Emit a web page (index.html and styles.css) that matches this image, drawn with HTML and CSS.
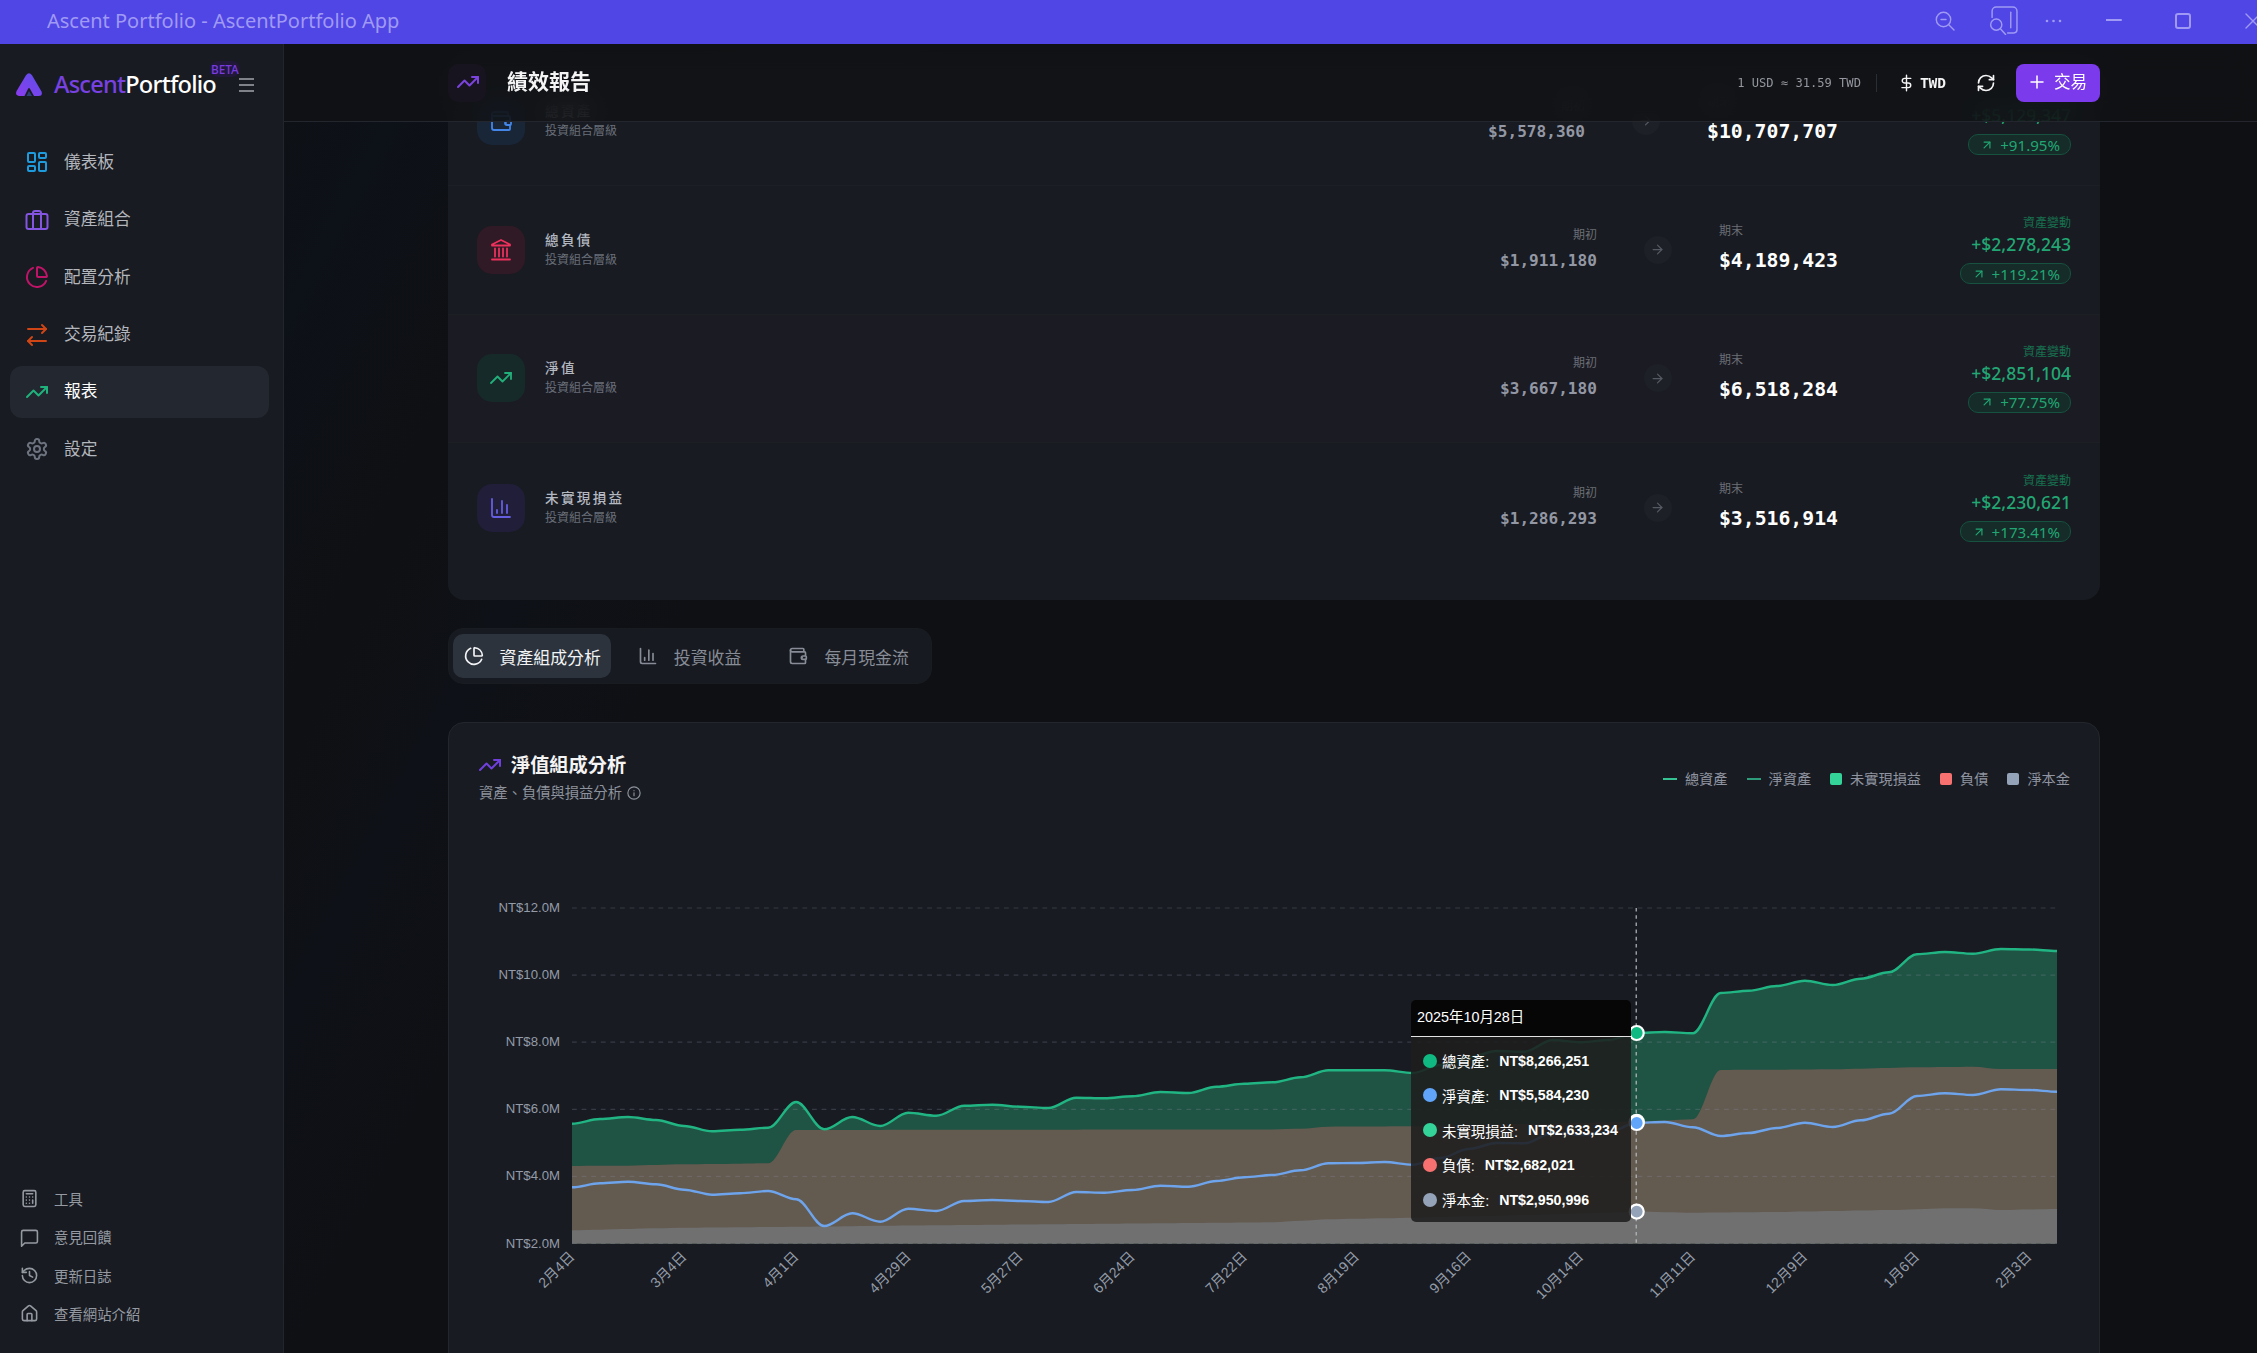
FILE: index.html
```html
<!DOCTYPE html>
<html lang="zh-Hant">
<head>
<meta charset="utf-8">
<title>Ascent Portfolio - AscentPortfolio App</title>
<link rel="stylesheet" href="styles.css">
</head>
<body>
<svg class="defs" width="0" height="0" aria-hidden="true">
  <symbol id="trend" viewBox="0 0 24 24"><path d="M22 7 13.5 15.5l-5-5L2 17"/><path d="M16 7h6v6"/></symbol>
  <symbol id="pie" viewBox="0 0 24 24"><path d="M21 12c.55 0 1-.45.95-1A10 10 0 0 0 13 2.05c-.55-.05-1 .4-1 .95v8a1 1 0 0 0 1 1z"/><path d="M21.2 15.9A10 10 0 1 1 8 2.83"/></symbol>
  <symbol id="bars" viewBox="0 0 24 24"><path d="M3 3v16a2 2 0 0 0 2 2h16"/><path d="M18 17V9"/><path d="M13 17V5"/><path d="M8 17v-3"/></symbol>
  <symbol id="wallet" viewBox="0 0 24 24"><path d="M17 14h.01"/><path d="M19 7V4a1 1 0 0 0-1-1H5a2 2 0 0 0 0 4h15a1 1 0 0 1 1 1v4h-3a2 2 0 0 0 0 4h3a1 1 0 0 0 1-1v-2a1 1 0 0 0-1-1"/><path d="M3 5v14a2 2 0 0 0 2 2h15a1 1 0 0 0 1-1v-4"/></symbol>
  <symbol id="arrow" viewBox="0 0 24 24"><path d="M5 12h14"/><path d="m12 5 7 7-7 7"/></symbol>
  <symbol id="upright" viewBox="0 0 24 24"><path d="M7 7h10v10"/><path d="M7 17 17 7"/></symbol>
</svg>

<div class="titlebar">
  <span class="titlebar-name">Ascent Portfolio - AscentPortfolio App</span>
  <div class="titlebar-tools">
    <svg class="tb-zoom" viewBox="0 0 20 20"><circle cx="8.5" cy="8.5" r="7.2"/><path d="M6 8.5h5M14 14l5 5"/></svg>
    <svg class="tb-panel" viewBox="0 0 28 28"><path d="M3 11V5a4 4 0 0 1 4-4h16a4 4 0 0 1 4 4v18a3 3 0 0 1-3 3h-6"/><path d="M21 6v15"/><circle cx="7" cy="18" r="5.4"/><path d="m11 22 5 5.500"/></svg>
    <svg class="tb-dots" viewBox="0 0 18 4"><circle cx="2" cy="2" r="1.300"/><circle cx="8.500" cy="2" r="1.300"/><circle cx="15" cy="2" r="1.300"/></svg>
    <svg class="tb-min" viewBox="0 0 16 16"><path d="M0 7h15"/></svg>
    <svg class="tb-max" viewBox="0 0 16 16"><rect x="1" y="1" width="14" height="14" rx="2"/></svg>
    <svg class="tb-close" viewBox="0 0 16 16"><path d="m1 1 14 14M15 1 1 15"/></svg>
  </div>
</div>

<div class="app">
  <aside class="sidebar">
    <div class="brand">
      <svg class="brand-mark" viewBox="0 0 26 23"><defs><linearGradient id="lg" x1="0" y1="1" x2="1" y2="0"><stop offset="0" stop-color="#8b3cf0"/><stop offset="1" stop-color="#5b50e8"/></linearGradient></defs><path d="M10 2.200Q13-1.500 16 2.200L25.500 18.500Q27 23 22.500 23H18L13.800 15.500Q13 14.500 12.200 15.500L8.500 23H3Q-1.200 22.500.6 18Z" fill="url(#lg)"/><path d="M10.500 23 13 18l3 5Z" fill="#2b3f78"/></svg>
      <span class="brand-name"><b>Ascent</b>Portfolio<i class="beta">BETA</i></span>
      <svg class="burger" viewBox="0 0 15 14"><path d="M0 1h15M0 7h15M0 13h15"/></svg>
    </div>
    <nav class="nav">
      <a class="nav-item c-sky"><svg viewBox="0 0 24 24"><rect x="3" y="3" width="7" height="9" rx="1"/><rect x="14" y="3" width="7" height="5" rx="1"/><rect x="14" y="12" width="7" height="9" rx="1"/><rect x="3" y="16" width="7" height="5" rx="1"/></svg><span>儀表板</span></a>
      <a class="nav-item c-violet"><svg viewBox="0 0 24 24"><path d="M8 21V5a2 2 0 0 1 2-2h4a2 2 0 0 1 2 2v16"/><rect x="1.500" y="6" width="21" height="15" rx="2"/></svg><span>資產組合</span></a>
      <a class="nav-item c-pink"><svg><use href="#pie"/></svg><span>配置分析</span></a>
      <a class="nav-item c-orange"><svg viewBox="0 0 24 24"><path d="m17 2 4 4-4 4"/><path d="M3 6h18"/><path d="m7 22-4-4 4-4"/><path d="M21 18H3"/></svg><span>交易紀錄</span></a>
      <a class="nav-item c-green active"><svg><use href="#trend"/></svg><span>報表</span></a>
      <a class="nav-item c-gray"><svg viewBox="0 0 24 24"><path d="M12.220 2h-.44a2 2 0 0 0-2 2v.18a2 2 0 0 1-1 1.730l-.43.25a2 2 0 0 1-2 0l-.15-.08a2 2 0 0 0-2.730.730l-.22.38a2 2 0 0 0 .73 2.730l.15.1a2 2 0 0 1 1 1.720v.51a2 2 0 0 1-1 1.740l-.15.09a2 2 0 0 0-.73 2.730l.22.38a2 2 0 0 0 2.730.730l.15-.08a2 2 0 0 1 2 0l.43.25a2 2 0 0 1 1 1.730V20a2 2 0 0 0 2 2h.44a2 2 0 0 0 2-2v-.18a2 2 0 0 1 1-1.730l.43-.25a2 2 0 0 1 2 0l.15.08a2 2 0 0 0 2.730-.730l.22-.39a2 2 0 0 0-.73-2.730l-.15-.08a2 2 0 0 1-1-1.740v-.5a2 2 0 0 1 1-1.740l.15-.09a2 2 0 0 0 .73-2.730l-.22-.38a2 2 0 0 0-2.730-.730l-.15.08a2 2 0 0 1-2 0l-.43-.25a2 2 0 0 1-1-1.730V4a2 2 0 0 0-2-2z"/><circle cx="12" cy="12" r="3"/></svg><span>設定</span></a>
    </nav>
    <nav class="links">
      <a><svg viewBox="0 0 24 24"><rect x="4" y="2" width="16" height="20" rx="2"/><path d="M8 6h8M16 14v4M16 10h.01M12 10h.01M8 10h.01M12 14h.01M8 14h.01M12 18h.01M8 18h.01"/></svg><span>工具</span></a>
      <a><svg viewBox="0 0 24 24"><path d="M22 17a2 2 0 0 1-2 2H6l-4 4V5a2 2 0 0 1 2-2h16a2 2 0 0 1 2 2z"/></svg><span>意見回饋</span></a>
      <a><svg viewBox="0 0 24 24"><path d="M3 12a9 9 0 1 0 9-9 9.750 9.750 0 0 0-6.740 2.740L3 8"/><path d="M3 3v5h5"/><path d="M12 7v5l4 2"/></svg><span>更新日誌</span></a>
      <a><svg viewBox="0 0 24 24"><path d="M15 21v-8a1 1 0 0 0-1-1h-4a1 1 0 0 0-1 1v8"/><path d="M3 10a2 2 0 0 1 .71-1.530l7-6a2 2 0 0 1 2.580 0l7 6A2 2 0 0 1 21 10v9a2 2 0 0 1-2 2H5a2 2 0 0 1-2-2z"/></svg><span>查看網站介紹</span></a>
    </nav>
  </aside>

  <main class="main">
    <header class="header">
      <span class="header-icon"><svg><use href="#trend"/></svg></span>
      <h1>績效報告</h1>
      <span class="rate">1 USD ≈ 31.59 TWD</span>
      <span class="currency"><svg viewBox="0 0 24 24"><path d="M12 1v22M18 5.500H9.500a3.500 3.250 0 0 0 0 6.500h5a3.500 3.250 0 0 1 0 6.500H5.500"/></svg>TWD</span>
      <svg class="refresh" viewBox="0 0 24 24"><path d="M3 12a9 9 0 0 1 9-9 9.750 9.750 0 0 1 6.740 2.740L21 8"/><path d="M21 3v5h-5"/><path d="M21 12a9 9 0 0 1-9 9 9.750 9.750 0 0 1-6.740-2.740L3 16"/><path d="M8 16H3v5"/></svg>
      <button class="trade"><svg viewBox="0 0 12 12"><path d="M6 0v12M0 6h12"/></svg><span>交易</span></button>
    </header>

    <div class="content">
      <section class="summary">
        <div class="row">
          <span class="tile blue"><svg><use href="#wallet"/></svg></span>
          <div class="label"><strong>總資產</strong><small>投資組合層級</small></div>
          <div class="begin"><small>期初</small><span>$5,578,360</span></div>
          <span class="go"><svg><use href="#arrow"/></svg></span>
          <div class="end"><small>期末</small><span>$10,707,707</span></div>
          <div class="change"><small>資產變動</small><span>+$5,129,347</span><em><svg><use href="#upright"/></svg>+91.95%</em></div>
        </div>
        <div class="row">
          <span class="tile rose"><svg viewBox="0 0 24 24"><path d="M3 21.500h18M6 18.500v-8M10 18.500v-8M14 18.500v-8M18 18.500v-8M12 2l9 4.500v1H3v-1z"/></svg></span>
          <div class="label"><strong>總負債</strong><small>投資組合層級</small></div>
          <div class="begin"><small>期初</small><span>$1,911,180</span></div>
          <span class="go"><svg><use href="#arrow"/></svg></span>
          <div class="end"><small>期末</small><span>$4,189,423</span></div>
          <div class="change"><small>資產變動</small><span>+$2,278,243</span><em><svg><use href="#upright"/></svg>+119.21%</em></div>
        </div>
        <div class="row tinted">
          <span class="tile green"><svg><use href="#trend"/></svg></span>
          <div class="label"><strong>淨值</strong><small>投資組合層級</small></div>
          <div class="begin"><small>期初</small><span>$3,667,180</span></div>
          <span class="go"><svg><use href="#arrow"/></svg></span>
          <div class="end"><small>期末</small><span>$6,518,284</span></div>
          <div class="change"><small>資產變動</small><span>+$2,851,104</span><em><svg><use href="#upright"/></svg>+77.75%</em></div>
        </div>
        <div class="row">
          <span class="tile indigo"><svg><use href="#bars"/></svg></span>
          <div class="label"><strong>未實現損益</strong><small>投資組合層級</small></div>
          <div class="begin"><small>期初</small><span>$1,286,293</span></div>
          <span class="go"><svg><use href="#arrow"/></svg></span>
          <div class="end"><small>期末</small><span>$3,516,914</span></div>
          <div class="change"><small>資產變動</small><span>+$2,230,621</span><em><svg><use href="#upright"/></svg>+173.41%</em></div>
        </div>
      </section>

      <div class="tabs">
        <span class="tab on"><svg><use href="#pie"/></svg>資產組成分析</span>
        <span class="tab"><svg><use href="#bars"/></svg>投資收益</span>
        <span class="tab"><svg><use href="#wallet"/></svg>每月現金流</span>
      </div>

      <section class="chart-card">
        <div class="chart-head">
          <div>
            <h2><svg><use href="#trend"/></svg>淨值組成分析</h2>
            <p>資產、負債與損益分析<svg viewBox="0 0 24 24"><circle cx="12" cy="12" r="10.500"/><path d="M12 16.500v-5M12 8h.01"/></svg></p>
          </div>
          <ul class="legend">
            <li><i class="line l1"></i>總資產</li>
            <li><i class="line l2"></i>淨資產</li>
            <li><i class="sq s1"></i>未實現損益</li>
            <li><i class="sq s2"></i>負債</li>
            <li><i class="sq s3"></i>淨本金</li>
          </ul>
        </div>
        <div class="plot">
          <svg id="chart" viewBox="449 830 1650 523"></svg>
          <div class="tip">
            <div class="tip-title">2025年10月28日</div>
            <div class="tip-row"><i class="d1"></i>總資產:<b>NT$8,266,251</b></div>
            <div class="tip-row"><i class="d2"></i>淨資產:<b>NT$5,584,230</b></div>
            <div class="tip-row"><i class="d3"></i>未實現損益:<b>NT$2,633,234</b></div>
            <div class="tip-row"><i class="d4"></i>負債:<b>NT$2,682,021</b></div>
            <div class="tip-row"><i class="d5"></i>淨本金:<b>NT$2,950,996</b></div>
          </div>
        </div>
      </section>
    </div>
  </main>
</div>
<script src="chart.js"></script>
</body>
</html>
```

FILE: styles.css
```css
* { box-sizing: border-box; }
body {
  margin: 0;
  height: 1353px;
  overflow: hidden;
  display: flex;
  flex-direction: column;
  background: #0f1014;
  color: #f4f4f5;
  font-family: "Noto Sans", "Noto Sans CJK TC", sans-serif;
}
svg { fill: none; stroke: currentColor; stroke-width: 2; stroke-linecap: round; stroke-linejoin: round; flex: none; display: block; }
.defs { position: absolute; }
h1, h2, p, ul { margin: 0; padding: 0; }
small, em, i { font-style: normal; }

/* window title bar */
.titlebar { height: 44px; flex: none; background: #4f46e5; color: #a09af4; display: flex; justify-content: space-between; overflow: hidden; }
.titlebar-name { padding-left: 47px; font-size: 20px; line-height: 41px; white-space: nowrap; letter-spacing: 0; }
.titlebar-tools { display: flex; align-items: center; height: 41px; margin-right: -4px; flex: none; }
.titlebar-tools svg { stroke-width: 1.4; }
.tb-zoom { width: 20px; height: 20px; margin-right: 34px; }
.tb-panel { width: 29px; height: 29px; margin-right: 27px; }
.tb-dots { width: 18px; height: 4px; margin-right: 43px; fill: currentColor; stroke: none; }
.titlebar-tools .tb-min { width: 16px; height: 16px; margin-right: 53px; stroke-width: 2; }
.titlebar-tools .tb-max { width: 16px; height: 16px; margin-right: 54px; stroke-width: 2; }
.tb-close { width: 16px; height: 16px; }

.app { flex: 1; min-height: 0; display: flex; }

/* sidebar */
.sidebar { width: 284px; flex: none; background: #181b21; border-right: 1px solid #22252b; display: flex; flex-direction: column; }
.brand { height: 92px; padding: 29px 0 0 16px; display: flex; align-items: flex-start; }
.brand-mark { width: 26px; height: 23px; stroke: none; margin-right: 12px; }
.brand-name { position: relative; width: 164px; font-size: 23.6px; line-height: 23px; font-weight: 500; letter-spacing: -0.78px; color: #fff; white-space: nowrap; }
.brand-name b { font-weight: 500; color: #7841e2; }
.beta { position: absolute; left: 156px; top: -12px; font-size: 11.8px; line-height: 16px; letter-spacing: 0; color: #7a3be0; background: #21183a; border-radius: 8px; padding: 0 1px; font-weight: 500; }
.burger { width: 15px; height: 14px; margin: 5px 0 0 21px; color: #a1a5ac; stroke-width: 1.6; stroke-linecap: butt; }
.nav { padding: 0 14px 0 10px; display: flex; flex-direction: column; gap: 4.6px; }
.nav-item { height: 52.8px; padding-left: 15px; display: flex; align-items: center; gap: 15px; border-radius: 12px; font-size: 16.7px; }
.nav-item svg { width: 24px; height: 24px; }
.nav-item span { color: #b3b6bc; line-height: 22px; margin-top: -1px; }
.nav-item.active { background: #23272f; }
.nav-item.active span { color: #fff; }
.c-sky { color: #1d9bdc; } .c-violet { color: #8455e0; } .c-pink { color: #bf1468; }
.c-orange { color: #cf4516; } .c-green { color: #1fb27c; } .c-gray { color: #6d7480; }
.links { margin-top: auto; padding: 0 0 20px 20px; display: flex; flex-direction: column; }
.links a { height: 38.3px; display: flex; align-items: center; gap: 15px; font-size: 14.4px; color: #959aa2; }
.links span { margin-top: -1px; }
.links svg { width: 19px; height: 19px; }

/* main column */
.main { position: relative; flex: 1; min-width: 0; overflow: hidden; background: linear-gradient(118deg, #0e1115 0, #0d1118 130px, #0f1013 330px, #0e1117 460px, #0f1014 640px); }
.header {
  position: absolute; z-index: 2; left: 0; right: 0; top: 0; height: 78px;
  display: flex; align-items: center; padding: 0 157px 0 164px;
  background: rgba(16, 17, 20, 0.8); backdrop-filter: blur(14px);
  border-bottom: 1px solid #23262d;
}
.header-icon { width: 38px; height: 38px; border-radius: 10px; background: #18141f; color: #7a43dc; display: grid; place-items: center; margin-right: 21px; }
.header-icon svg { width: 24px; height: 24px; margin: -2px 0 0 2px; }
.header h1 { font-size: 21px; line-height: 30px; font-weight: 700; margin: -3px auto 0 0; }
.rate { font: 12.1px "DejaVu Sans Mono", monospace; color: #94979f; padding-right: 15px; border-right: 1px solid #2b2e35; line-height: 18px; margin-right: 21px; }
.currency { display: flex; align-items: center; gap: 5px; font: bold 14.6px "DejaVu Sans Mono", monospace; margin-right: 30px; letter-spacing: -0.1px; }
.currency svg { width: 17px; height: 18px; }
.refresh { width: 20px; height: 20px; margin-right: 20px; }
.trade { border: 0; width: 84px; height: 38px; border-radius: 8px; background: #7c3aed; color: #fff; font: 16.6px "Noto Sans CJK TC", sans-serif; display: flex; align-items: center; justify-content: center; gap: 11px; padding: 0; }
.trade span { line-height: 24px; margin: -3px -2px 0 0; }
.trade svg { width: 12px; height: 12px; stroke-width: 1.5; overflow: visible; margin-top: -2px; }

.content { padding: 13px 157px 0 164px; }
.summary { background: #181b21; border-radius: 16px; padding-bottom: 28px; overflow: hidden; }
.row { height: 128.8px; padding: 0 29px; display: flex; align-items: center; border-bottom: 1px solid #1c1f24; }
.row:last-child { border-bottom: 0; }
.row.tinted { background: #1b1b24; }
.tile { width: 48px; height: 48px; border-radius: 15px; display: grid; place-items: center; margin-right: 20px; }
.tile svg { width: 24px; height: 24px; stroke-width: 1.8; }
.tile.blue { background: #182638; color: #4386e8; }
.tile.rose { background: #301a25; color: #ec315d; }
.tile.green { background: #172a2a; color: #22b07a; }
.tile.indigo { background: #201e38; color: #655ee0; }
.label { flex: 1; display: flex; flex-direction: column; margin-top: -1px; }
.label strong { font-size: 13.6px; font-weight: 500; letter-spacing: 2.3px; line-height: 21px; color: #b3b8c1; }
.label small { font-size: 12px; line-height: 20px; color: #696f7a; }
.begin { text-align: right; display: flex; flex-direction: column; margin: -2px 47px 0 0; }
.begin small, .end small { font-size: 12px; line-height: 18px; color: #6b6e75; }
.begin span { font: bold 16.1px/34px "DejaVu Sans Mono", monospace; color: #9397a4; }
.begin span { margin-bottom: -6px; }
.go { width: 28px; height: 28px; border-radius: 50%; background: #1d2026; color: #555963; display: grid; place-items: center; margin-right: 47px; }
.go svg { width: 15px; height: 15px; }
.end { display: flex; flex-direction: column; margin-top: -3px; }
.end span { font: bold 19.8px/42px "DejaVu Sans Mono", monospace; color: #fff; margin-bottom: -8px; }
.change { width: 233px; display: flex; flex-direction: column; align-items: flex-end; color: #22a774; margin-top: -2px; }
.change small { font-size: 12px; line-height: 20px; color: #17704f; }
.change span { font-size: 17.5px; line-height: 22px; font-weight: 500; }
.change em { margin-top: 8px; height: 21px; border: 1px solid #17513f; border-radius: 10px; background: #152c29; padding: 0 10px 0 11px; display: flex; align-items: center; gap: 6px; font-size: 15.1px; line-height: 18px; }
.change em svg { width: 14px; height: 14px; }

.tabs { width: 484px; height: 56px; margin-top: 28px; background: #171a20; border: 1px solid #191c21; border-radius: 15px; display: flex; align-items: center; padding-left: 4px; }
.tab { height: 44px; display: flex; align-items: center; gap: 16px; padding: 0 10.500px; border-radius: 10px; font-size: 16.9px; color: #878c96; margin-right: 16px; white-space: nowrap; }
.tab + .tab { margin-right: 26px; }
.tab svg { width: 20px; height: 20px; }
.tab.on { background: #2c333d; color: #f2f3f5; }

/* chart card */
.chart-card { margin-top: 38px; height: 680px; background: #181b22; border: 1px solid #23262d; border-radius: 16px; }
.chart-head { height: 107px; padding: 28px 29px 0 29px; display: flex; justify-content: space-between; }
.chart-head h2 { display: flex; align-items: center; gap: 9px; font-size: 19.2px; line-height: 28px; font-weight: 700; }
.chart-head h2 svg { width: 24px; height: 24px; color: #7040dc; }
.chart-head p { display: flex; align-items: center; gap: 5px; margin-top: 1px; padding-left: 1px; font-size: 14.3px; line-height: 26px; color: #8d929c; }
.chart-head p svg { width: 14px; height: 14px; }
.legend { display: flex; list-style: none; gap: 19px; padding-top: 17px; font-size: 14.2px; line-height: 20px; color: #8f94a0; height: 38px; white-space: nowrap; }
.legend li { display: flex; align-items: center; gap: 8px; }
.line { width: 14px; height: 2px; background: #34c493; }
.l2 { background: #2c9c7a; }
.sq { width: 12px; height: 12px; border-radius: 2px; }
.s1 { background: #34d399; } .s2 { background: #f87171; } .s3 { background: #94a3b8; }

.plot { position: relative; height: 523px; }
#chart { width: 1650px; height: 523px; stroke-linecap: butt; }
#chart text { stroke: none; fill: #949ba8; font: 13.2px "Liberation Sans", "Noto Sans CJK TC", sans-serif; text-anchor: end; }
#chart .tick-x { font-size: 14.2px; }
.a-profit { fill: #1f5343; stroke: none; }
.a-debt { fill: #635a50; stroke: none; }
.a-base { fill: #707070; stroke: none; }
.s-total { stroke: #21b583; stroke-width: 2.4; }
.s-net { stroke: #6ea4ec; stroke-width: 2.4; }
.grid { stroke: #8c94a6; stroke-opacity: 0.26; stroke-width: 1.2; stroke-dasharray: 4.800 4.800; }
.cursor { stroke: #b6b9bd; stroke-width: 1.2; stroke-dasharray: 3.600 3.600; }
.dot { stroke: #fff; stroke-width: 2.2; }

.tip { position: absolute; left: 962px; top: 170px; width: 220px; height: 222px; border-radius: 5px; overflow: hidden; background: rgba(30, 30, 30, 0.88); color: #fff; font: 14.4px "Liberation Sans", "Noto Sans CJK TC", sans-serif; }
.tip-title { height: 37px; line-height: 35px; padding-left: 6px; background: #060606; border-bottom: 1px solid #e3e3e3; margin-bottom: 6px; }
.tip-row { height: 34.8px; display: flex; align-items: center; padding-left: 12px; white-space: nowrap; }
.tip-row i { width: 14px; height: 14px; border-radius: 50%; margin-right: 5px; }
.tip-row b { margin-left: 10px; font-size: 14.2px; }
.d1 { background: #10b981; } .d2 { background: #60a5fa; } .d3 { background: #34d399; } .d4 { background: #f87171; } .d5 { background: #94a3b8; }
```

FILE: chart.js
```js
const svg = document.getElementById('chart');
const X0 = 572, X1 = 2057, BOTTOM = 1243.5, TOP = 908;
const STEP = (X1 - X0) / 53;

// One y coordinate per week, in the chart's own units.
const total = [1123.7,1119,1117,1120,1126,1131.3,1129.7,1127.7,1102,1129.3,1117,1126,1112.7,1115.7,1105.7,1104.7,1106.7,1108,1097.7,1098.3,1096.3,1092,1093,1086.7,1083.7,1082.3,1077.3,1070.3,1070.3,1070.3,1073,1065,1057.3,1051,1051.7,1040,1042.3,1040,1033,1032,1033.3,993,990.7,986,980.7,985,978.7,972.3,954.3,952,953.7,949,949.5,951];
const net = [1187.3,1183.3,1181.7,1184.3,1189.7,1194.7,1193.3,1191,1199.3,1226,1213.3,1221.7,1208.7,1211,1201,1200,1201,1202,1192,1192.7,1190,1185.7,1186.7,1181,1177.3,1175,1170.3,1163.3,1163,1162,1164.7,1158,1149,1143,1143.3,1133,1135,1132,1122.7,1122,1127.3,1136,1133,1128,1122.7,1127,1120.3,1113.7,1096,1093.3,1095,1089.3,1090,1091.7];
// Sparse [week, y] pairs; weeks in between are interpolated.
const debt = fill([[0,1166],[2,1165.7],[4,1164.3],[7,1163.3],[8,1130],[25,1129.4],[26,1128.7],[27,1126.7],[30,1126.3],[34,1124],[38,1121.6],[40,1119.3],[41,1070],[45,1069.3],[48,1067.3],[50,1066.7],[51,1069],[53,1069]]);
const base = fill([[0,1230.3],[4,1227.7],[17,1224.3],[25,1222.3],[27,1219.3],[30,1217.7],[34,1215],[38,1211.6],[40,1212.7],[43,1212],[47,1210],[49,1208.3],[50,1208.3],[51,1210],[53,1209]]);

function fill(pairs) {
  const out = [];
  for (let k = 0; k < pairs.length - 1; k++) {
    const [a, ya] = pairs[k], [b, yb] = pairs[k + 1];
    for (let i = a; i < b; i++) out.push(ya + (yb - ya) * (i - a) / (b - a));
  }
  out.push(pairs[pairs.length - 1][1]);
  return out;
}
function curve(ys) {
  let d = `M${X0} ${ys[0]}`;
  for (let i = 1; i < ys.length; i++) {
    const x = X0 + STEP * i, p = x - STEP, c = STEP * 0.35;
    d += `C${p + c} ${ys[i - 1]} ${x - c} ${ys[i]} ${x} ${ys[i]}`;
  }
  return d;
}
const area = (ys, cls) => `<path class="${cls}" d="${curve(ys)}V${BOTTOM}H${X0}Z"/>`;

let out = area(total, 'a-profit') + area(debt, 'a-debt') + area(base, 'a-base');
for (let k = 0; k < 6; k++) {
  const y = TOP + k * (BOTTOM - TOP) / 5;
  out += `<path class="grid" d="M${X0} ${y}H${X1}"/>`;
  out += `<text x="560" y="${y + 4}">NT$${12 - 2 * k}.0M</text>`;
}
out += `<path class="s-total" d="${curve(total)}"/><path class="s-net" d="${curve(net)}"/>`;
['2月4日','3月4日','4月1日','4月29日','5月27日','6月24日','7月22日','8月19日','9月16日','10月14日','11月11日','12月9日','1月6日','2月3日'].forEach((t, i) => {
  const x = X0 + STEP * 4 * i + 3.5;
  out += `<text class="tick-x" transform="translate(${x} 1257.5) rotate(-45)">${t}</text>`;
});
const cx = X0 + STEP * 38;
out += `<path class="cursor" d="M${cx - 0.5} ${TOP}V${BOTTOM}"/>`;
[['#34d399', 1121.8], ['#10b981', 1033], ['#60a5fa', 1123], ['#94a3b8', 1211.6]].forEach(([c, y]) => {
  out += `<circle class="dot" cx="${cx}" cy="${y}" r="7" fill="${c}"/>`;
});
svg.innerHTML = out;
```
